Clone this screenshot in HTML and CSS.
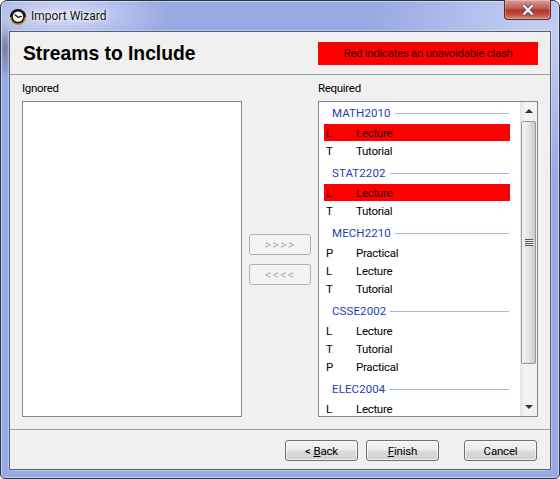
FILE: index.html
```html
<!DOCTYPE html>
<html lang="en">
  <head>
    <meta charset="UTF-8" />
    <title>Import Wizard</title>
    <link rel="stylesheet" href="styles.css">
  </head>
  <body>
    <div class="window">
      <div class="titlebar">
        <svg class="app-icon" width="18" height="18" viewBox="0 0 18 18">
          <circle cx="9" cy="9" r="8" fill="#d08318" />
          <path d="M1 9a8 8 0 0 1 16 0z" fill="#141414" />
          <circle cx="9" cy="8.6" r="6.8" fill="#1a1a1a" />
          <circle cx="9" cy="8.6" r="5.2" fill="#f6f6f6" />
          <path d="M5.8 6.4L9 9.2l3.8-.8" fill="none" stroke="#222" stroke-width="1.3" />
        </svg>
        <span class="title-text">Import Wizard</span>
        <div class="close-btn">
          <svg width="16" height="12" viewBox="0 0 16 12">
            <path d="M3.5 1.5l9 9M12.5 1.5l-9 9" fill="none" stroke="#4a5560" stroke-width="4" />
            <path d="M3.5 1.5l9 9M12.5 1.5l-9 9" fill="none" stroke="#f4f6f8" stroke-width="2.4" />
          </svg>
        </div>
      </div>

      <div class="client">
        <header class="wizard-head">
          <h1>Streams to Include</h1>
          <div class="clash-note">Red indicates an unavoidable clash</div>
        </header>

        <main class="wizard-body">
          <label class="col-label">Ignored</label>
          <span></span>
          <label class="col-label">Required</label>

          <div class="listbox"></div>

          <div class="move-btns">
            <button class="btn move" disabled>&gt;&gt;&gt;&gt;</button>
            <button class="btn move" disabled>&lt;&lt;&lt;&lt;</button>
          </div>

          <div class="listbox">
            <div class="stream-list">
              <div class="group first"><span>MATH2010</span></div>
              <div class="row clash"><span class="code">L</span>Lecture</div>
              <div class="row"><span class="code">T</span>Tutorial</div>
              <div class="group"><span>STAT2202</span></div>
              <div class="row clash"><span class="code">L</span>Lecture</div>
              <div class="row"><span class="code">T</span>Tutorial</div>
              <div class="group"><span>MECH2210</span></div>
              <div class="row"><span class="code">P</span>Practical</div>
              <div class="row"><span class="code">L</span>Lecture</div>
              <div class="row"><span class="code">T</span>Tutorial</div>
              <div class="group"><span>CSSE2002</span></div>
              <div class="row"><span class="code">L</span>Lecture</div>
              <div class="row"><span class="code">T</span>Tutorial</div>
              <div class="row"><span class="code">P</span>Practical</div>
              <div class="group"><span>ELEC2004</span></div>
              <div class="row"><span class="code">L</span>Lecture</div>
            </div>
            <div class="scrollbar">
              <div class="arrow-btn"><i class="arrow up"></i></div>
              <div class="thumb"><i class="grip"></i></div>
              <div class="track"></div>
              <div class="arrow-btn"><i class="arrow down"></i></div>
            </div>
          </div>
        </main>

        <footer class="wizard-foot">
          <button class="btn">&lt; <u>B</u>ack</button>
          <button class="btn"><u>F</u>inish</button>
          <button class="btn cancel">Cancel</button>
        </footer>
      </div>
    </div>
  </body>
</html>
```

FILE: styles.css
```css
* {
  box-sizing: border-box;
}

html,
body {
  height: 100%;
  margin: 0;
}

body {
  background-color: #fff;
  font-family: Roboto, "Open Sans", sans-serif;
  font-size: 11.5px;
  letter-spacing: -0.3px;
  color: #000;
  overflow: hidden;
}

.window {
  height: 479px;
  display: flex;
  flex-direction: column;
  padding: 0 8px 8px;
  border: 1px solid #2b3244;
  border-radius: 7px 7px 5px 5px;
  box-shadow: inset 0 0 0 1px rgba(255, 255, 255, 0.45);
  background-color: #98a9e4;
  background-image:
    radial-gradient(ellipse 110px 34px at 60px 14px, #d6def4 0%, rgba(214, 222, 244, 0) 100%),
    radial-gradient(ellipse 170px 150px at 540px 30px, #c4d0f0 0%, rgba(196, 208, 240, 0) 100%),
    radial-gradient(ellipse 7px 30px at 4px 48px, #76809f 0%, rgba(118, 128, 159, 0) 100%);
}

.titlebar {
  height: 30px;
  flex: none;
  display: flex;
  align-items: flex-start;
}

.app-icon {
  margin-top: 7px;
  margin-right: 4px;
}

.title-text {
  margin-top: 6px;
  font-size: 12px;
  line-height: 18px;
  letter-spacing: 0;
  color: #111;
  text-shadow: 0 0 6px #fff, 0 0 3px #fff;
}

.close-btn {
  width: 47px;
  height: 20px;
  margin-left: auto;
  margin-top: -1px;
  display: flex;
  align-items: center;
  justify-content: center;
  border: 1px solid #5a2a2c;
  border-top: none;
  border-radius: 0 0 4px 4px;
  background: linear-gradient(#d8a09c 0%, #c4605a 40%, #b03a2e 55%, #c2483a 75%, #d88a7c 100%);
  box-shadow: inset 0 0 0 1px rgba(255, 255, 255, 0.25);
}

.client {
  flex: 1;
  display: flex;
  flex-direction: column;
  background-color: #f0f0f0;
  border: 1px solid #555e72;
  box-shadow: 0 0 0 1px rgba(255, 255, 255, 0.3);
}

.wizard-head {
  height: 43px;
  flex: none;
  display: flex;
  align-items: center;
  justify-content: space-between;
  padding: 0 12px 0 13px;
  border-bottom: 1px solid #a0a0a0;
}

.wizard-head h1 {
  margin: 0;
  padding-top: 1px;
  font-family: "Liberation Sans", Arial, sans-serif;
  font-size: 19.3px;
  font-weight: bold;
  letter-spacing: 0;
}

.clash-note {
  width: 220px;
  height: 23px;
  line-height: 22px;
  text-align: center;
  background-color: #f00;
  color: #2a0000;
}

.wizard-body {
  flex: 1;
  display: grid;
  grid-template-columns: 220px 76px 220px;
  grid-template-rows: 20px 316px;
  padding: 6px 12px 12px;
}

.col-label {
  line-height: 15px;
}

.listbox {
  display: flex;
  min-height: 0;
  background-color: #fff;
  border: 1px solid #828790;
  overflow: hidden;
}

.move-btns {
  display: flex;
  flex-direction: column;
  align-items: center;
  justify-content: center;
  gap: 9px;
}

.btn {
  width: 73px;
  height: 21px;
  padding: 0;
  font-family: inherit;
  font-size: 11.5px;
  letter-spacing: -0.2px;
  color: #000;
  border: 1px solid #707070;
  border-radius: 3px;
  background: linear-gradient(#f3f3f3 0%, #ececec 48%, #dcdcdc 52%, #d0d0d0 100%);
  box-shadow: inset 0 0 0 1px rgba(255, 255, 255, 0.7);
}

.btn.move {
  width: 62px;
  font-size: 13px;
  letter-spacing: 1px;
  color: #b0b0b0;
  background: #f4f4f4;
  border-color: #adb2b5;
  box-shadow: none;
}

.stream-list {
  flex: 1;
  min-width: 0;
  padding: 0 10px 0 5px;
  overflow: hidden;
}

.group {
  height: 22px;
  margin-top: 3px;
  display: flex;
  align-items: center;
  padding: 0 1px 0 8px;
  letter-spacing: 0.1px;
  color: #1c3fb0;
}

.group.first {
  margin-top: 0;
}

.group::after {
  content: "";
  flex: 1;
  height: 1px;
  margin-left: 4px;
  background-color: #a3b8ea;
}

.row {
  height: 17px;
  margin-bottom: 1px;
  display: flex;
  align-items: center;
  padding-left: 2px;
}

.row.clash {
  background-color: #f00;
  color: #2a0000;
}

.code {
  width: 30px;
  flex: none;
}

.scrollbar {
  width: 17px;
  flex: none;
  display: flex;
  flex-direction: column;
  background: linear-gradient(90deg, #e6e6e6, #f4f4f4 30%, #f0f0f0);
}

.arrow-btn {
  height: 18px;
  flex: none;
  display: flex;
  align-items: center;
  justify-content: center;
}

.arrow {
  width: 0;
  height: 0;
  border-left: 4px solid transparent;
  border-right: 4px solid transparent;
}

.arrow.up {
  border-bottom: 4px solid #333;
}

.arrow.down {
  border-top: 4px solid #333;
}

.thumb {
  height: 243px;
  flex: none;
  margin: 1px 1px 0;
  display: flex;
  align-items: center;
  justify-content: center;
  border: 1px solid #979797;
  border-radius: 2px;
  background: linear-gradient(90deg, #f2f2f2 0%, #e6e6e6 50%, #c8c8c8 100%);
}

.grip {
  width: 8px;
  height: 7px;
  background: repeating-linear-gradient(#555 0, #555 1px, #eee 1px, #eee 2px);
}

.track {
  flex: 1;
}

.wizard-foot {
  flex: 1;
  display: flex;
  gap: 8px;
  padding: 10px 13px 0 0;
  justify-content: flex-end;
  border-top: 1px solid #a0a0a0;
}

.btn.cancel {
  margin-left: 17px;
}
```
